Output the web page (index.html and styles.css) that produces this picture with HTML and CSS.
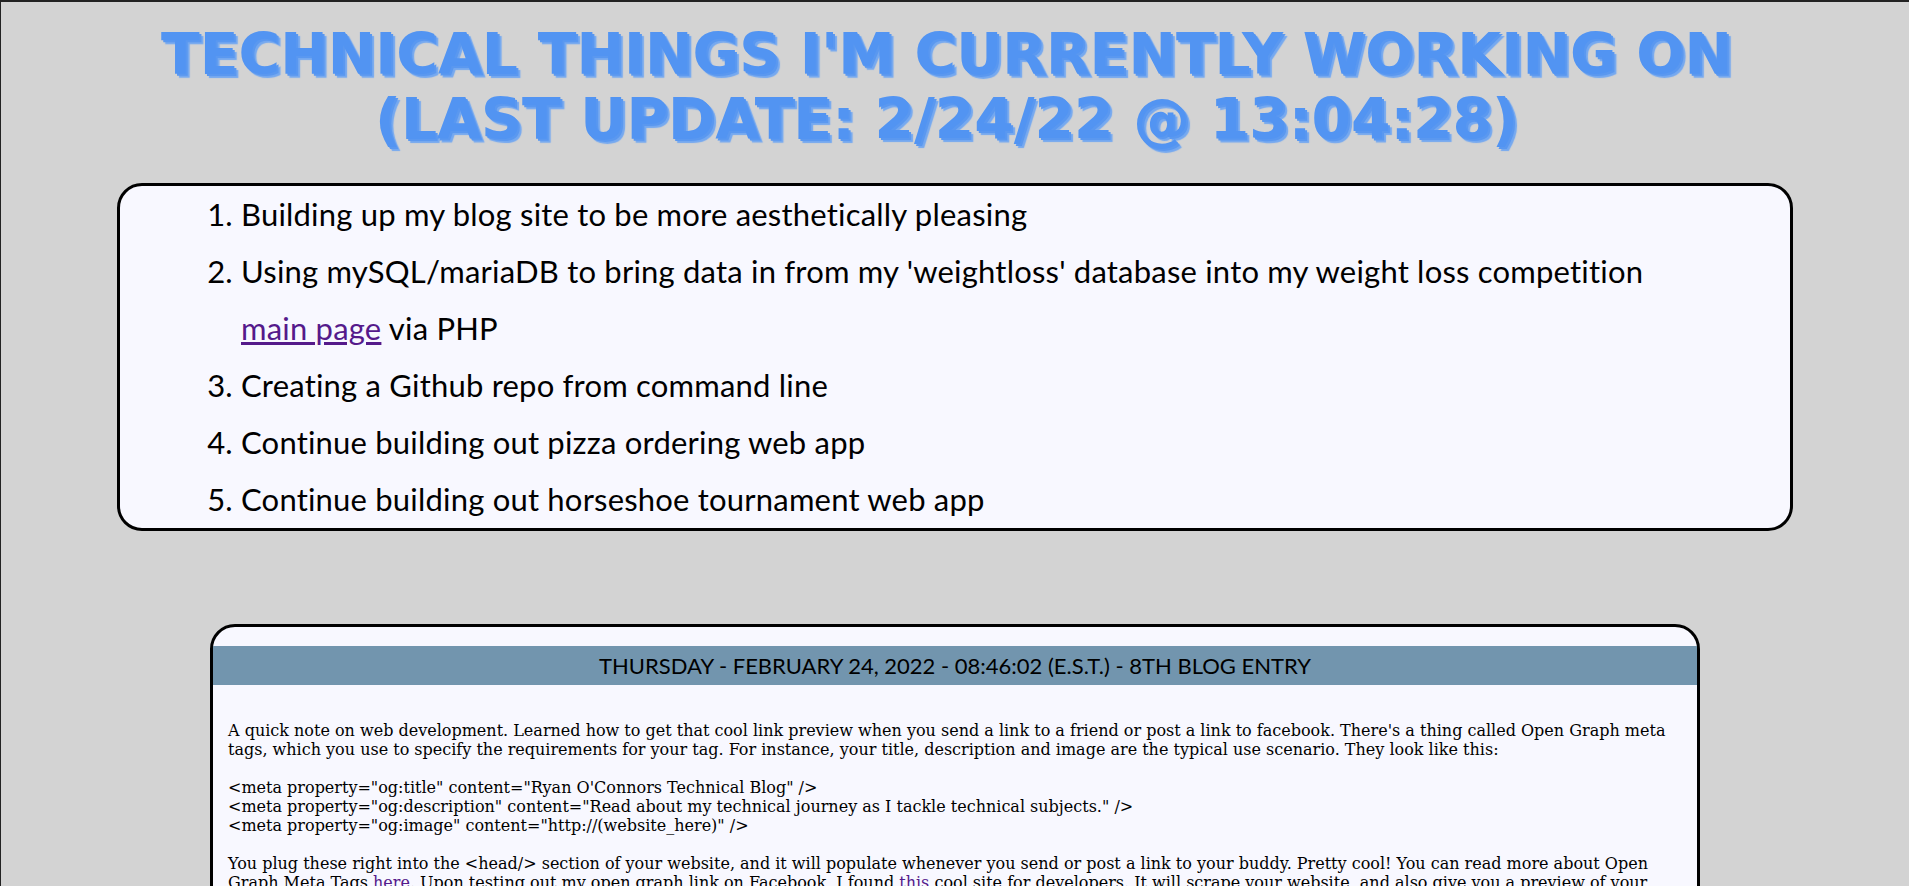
FILE: index.html
```html
<!doctype html>
<html>
  <head>
    <meta charset="utf-8">
    <title>Ryan O'Connor's Technical Blog</title>
    <link rel="stylesheet" href="styles.css">
  </head>
  <body>
    <h1 class="page-title">Technical things I'm currently working on<br>(Last update: 2/24/22 @ 13:04:28)</h1>

    <div class="todo-box">
      <ol class="todo-list">
        <li>Building up my blog site to be more aesthetically pleasing</li>
        <li>Using mySQL/mariaDB to bring data in from my 'weightloss' database into my weight loss competition <a class="seen-link" href="#">main page</a> via PHP</li>
        <li>Creating a Github repo from command line</li>
        <li>Continue building out pizza ordering web app</li>
        <li>Continue building out horseshoe tournament web app</li>
      </ol>
    </div>

    <div class="blog-entry">
      <h2 class="entry-title">Thursday - February 24, 2022 - 08:46:02 (E.S.T.) - 8th Blog Entry</h2>
      <div class="entry-body">
        <p>A quick note on web development. Learned how to get that cool link preview when you send a link to a friend or post a link to facebook. There's a thing called Open Graph meta tags, which you use to specify the requirements for your tag. For instance, your title, description and image are the typical use scenario. They look like this:</p>
        <p>&lt;meta property="og:title" content="Ryan O'Connors Technical Blog" /&gt;<br>
        &lt;meta property="og:description" content="Read about my technical journey as I tackle technical subjects." /&gt;<br>
        &lt;meta property="og:image" content="http://(website_here)" /&gt;</p>
        <p>You plug these right into the &lt;head/&gt; section of your website, and it will populate whenever you send or post a link to your buddy. Pretty cool! You can read more about Open Graph Meta Tags <a class="seen-link" href="#">here</a>. Upon testing out my open graph link on Facebook, I found <a class="seen-link" href="#">this</a> cool site for developers. It will scrape your website, and also give you a preview of your</p>
      </div>
    </div>
  </body>
</html>
```

FILE: styles.css
```css
html {
  background-color: lightgray;
}

body {
  margin: 0;
  min-height: 884px;
  background-color: lightgray;
  border-top: 2px solid #222;
  border-left: 1px solid #222;
}

.page-title {
  margin: 0;
  padding: 20px 17px 0 0;
  font-family: "DejaVu Sans", sans-serif;
  font-size: 56.75px;
  line-height: 65px;
  font-weight: bold;
  text-align: center;
  text-transform: uppercase;
  color: #5294f2;
  text-shadow: 2px 2px 0 #5a98f0, 4px 4px 1px #74a8f0;
}

.todo-box {
  box-sizing: border-box;
  width: 1676px;
  margin: 31px 0 0 116px;
  border: 3px solid black;
  border-radius: 25px;
  background-color: ghostwhite;
}

.todo-list {
  margin: 0;
  padding: 0 120px 0 121px;
  font-family: "Lato", sans-serif;
  font-size: 31px;
  letter-spacing: 0.2px;
  line-height: 57px;
  color: black;
}

.seen-link {
  color: #551a8b;
}

.blog-entry {
  box-sizing: border-box;
  width: 1490px;
  margin: 93px 0 0 209px;
  border: 3px solid black;
  border-radius: 25px;
  background-color: ghostwhite;
}

.entry-title {
  margin: 19px 0 0;
  padding: 0;
  font-family: "Lato", sans-serif;
  font-weight: normal;
  font-size: 22px;
  line-height: 39px;
  text-align: center;
  text-transform: uppercase;
  background-color: #7295ae;
  color: black;
}

.entry-body {
  padding: 0 15px;
  font-family: "DejaVu Serif", serif;
  font-size: 16px;
  line-height: 19px;
}

.entry-body p {
  margin: 19px 0;
}

.entry-body p:first-child {
  margin-top: 36px;
}
```
